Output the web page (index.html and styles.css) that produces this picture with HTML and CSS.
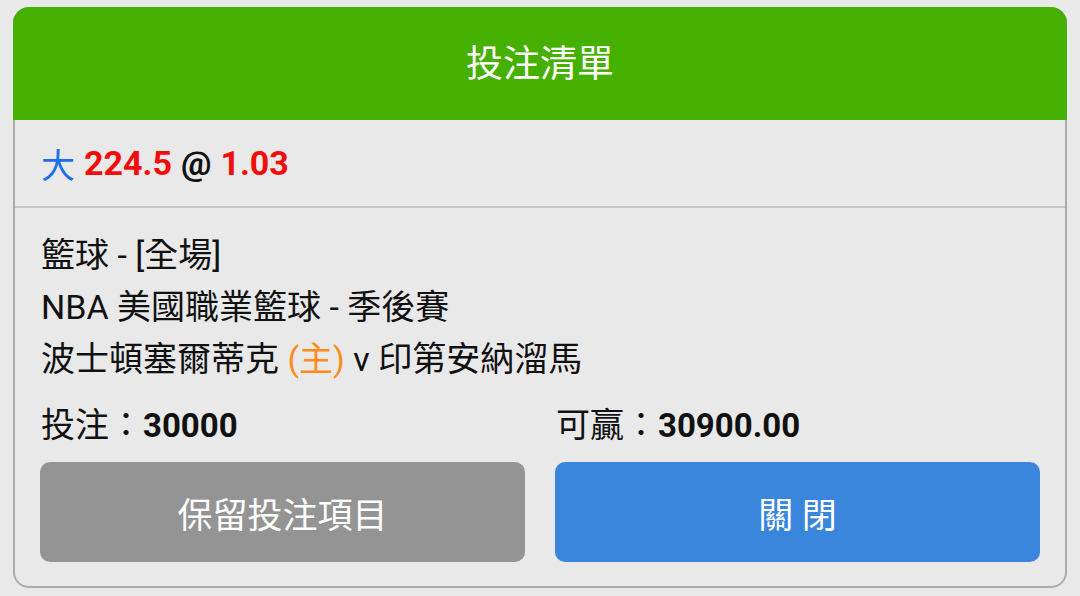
FILE: index.html
```html
<!DOCTYPE html>
<html lang="zh-Hant">
<head>
    <meta charset="UTF-8">
    <title>投注清單</title>
    <link rel="stylesheet" href="styles.css">
</head>
<body>
    <div class="card">
        <div class="card-header">投注清單</div>
        <div class="selection">
            <span class="side">大</span>
            <span class="num">224.5</span>
            <span class="at">@</span>
            <span class="num">1.03</span>
        </div>
        <div class="details">
            <div class="line">籃球 - [全場]</div>
            <div class="line">NBA 美國職業籃球 - 季後賽</div>
            <div class="line">波士頓塞爾蒂克 <span class="home">(主)</span> v 印第安納溜馬</div>
            <div class="amounts">
                <div>投注：<b>30000</b></div>
                <div>可贏：<b>30900.00</b></div>
            </div>
            <div class="actions">
                <button class="btn btn-keep">保留投注項目</button>
                <button class="btn btn-close">關 閉</button>
            </div>
        </div>
    </div>
</body>
</html>
```

FILE: styles.css
```css
body {
    margin: 0;
    padding: 7px 13px 8px;
    background: #e9e9e9;
    font-family: Roboto, "Noto Sans CJK TC", sans-serif;
    color: #111;
}
.card {
    border: 2px solid #acacac;
    border-top: 0;
    border-radius: 16px;
    background: #e9e9e9;
}
.card-header {
    margin: 0 -2px;
    height: 113px;
    padding-bottom: 6px;
    box-sizing: border-box;
    background: #45b000;
    border-radius: 16px 16px 0 0;
    color: #fff;
    font-size: 37px;
    display: flex;
    align-items: center;
    justify-content: center;
}
.selection {
    height: 86px;
    padding-left: 26px;
    border-bottom: 2px solid #c8c8c8;
    display: flex;
    align-items: center;
    gap: 9px;
    font-size: 34px;
    font-weight: bold;
}
.side {
    color: #1a6ff0;
    font-weight: normal;
}
.num {
    color: #f20d0d;
}
.at {
    color: #111;
}
.details {
    padding: 21px 25px 24px;
    font-size: 34px;
}
.line {
    line-height: 52px;
    padding-left: 1px;
}
.home {
    color: #ff8c1a;
}
.amounts {
    margin-top: 14px;
    display: grid;
    grid-template-columns: 1fr 1fr;
    gap: 30px;
    line-height: 52px;
    font-size: 34px;
}
.amounts div {
    padding-left: 1px;
}
.amounts b {
    font-size: 33px;
}
.actions {
    margin-top: 10px;
    display: grid;
    grid-template-columns: 1fr 1fr;
    gap: 30px;
}
.btn {
    height: 100px;
    border: none;
    border-radius: 10px;
    color: #fff;
    font-family: Roboto, "Noto Sans CJK TC", sans-serif;
    font-size: 35px;
    cursor: pointer;
}
.btn-keep {
    background: #949494;
}
.btn-close {
    background: #3a86dc;
}
```
